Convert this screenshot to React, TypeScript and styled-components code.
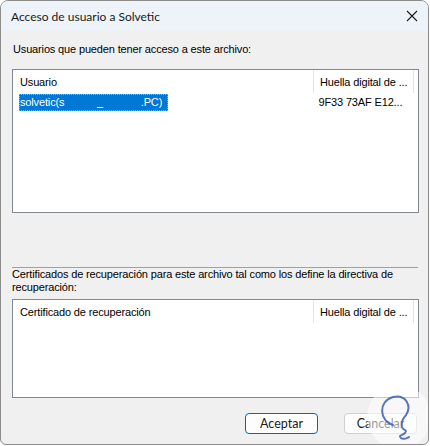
import React from "react";
import styled, { createGlobalStyle } from "styled-components";

const GlobalStyle = createGlobalStyle`
  html, body {
    margin: 0;
    padding: 0;
    background: #ffffff;
  }
  #root {
    width: 430px;
    height: 446px;
  }
`;

interface Column {
  label: string;
  width: number;
}

interface Row {
  cells: string[];
  selected?: boolean;
}

function ListView({
  columns,
  rows,
  height,
}: {
  columns: Column[];
  rows: Row[];
  height: number;
}) {
  return (
    <ListBox $height={height}>
      <HeaderRow>
        {columns.map((c) => (
          <HeaderCell key={c.label} $width={c.width}>
            {c.label}
          </HeaderCell>
        ))}
      </HeaderRow>
      {rows.map((r, i) => (
        <ItemRow key={i}>
          {r.cells.map((cell, j) => (
            <ItemCell key={j} $width={columns[j].width}>
              {j === 0 && r.selected ? <Selected>{cell}</Selected> : cell}
            </ItemCell>
          ))}
        </ItemRow>
      ))}
    </ListBox>
  );
}

function App() {
  return (
    <>
      <GlobalStyle />
      <Window>
        <TitleBar>
          <Title>Acceso de usuario a Solvetic</Title>
          <CloseButton aria-label="Cerrar">
            <svg width="12" height="12" viewBox="0 0 12 12">
              <path
                d="M1 1 L11 11 M11 1 L1 11"
                stroke="#1a1a1a"
                strokeWidth="1.1"
                fill="none"
              />
            </svg>
          </CloseButton>
        </TitleBar>
        <Body>
          <Label>Usuarios que pueden tener acceso a este archivo:</Label>
          <ListView
            height={144}
            columns={[
              { label: "Usuario", width: 295 },
              { label: "Huella digital de ...", width: 100 },
            ]}
            rows={[
              {
                cells: ["solvetic(s\u2003\u2003\u2003_\u2003\u2003\u2003\u2002.PC)", "9F33 73AF E12..."],
                selected: true,
              },
            ]}
          />
          <Spacer />
          <SectionLabel>
            Certificados de recuperación para este archivo tal como los define la
            directiva de recuperación:
          </SectionLabel>
          <ListView
            height={99}
            columns={[
              { label: "Certificado de recuperación", width: 295 },
              { label: "Huella digital de ...", width: 100 },
            ]}
            rows={[]}
          />
          <Footer>
            <Button $primary>Aceptar</Button>
            <Button>Cancelar</Button>
          </Footer>
        </Body>
        <Watermark>
          <svg width="66" height="66" viewBox="0 0 66 66">
            <circle cx="33" cy="33" r="32" fill="rgba(255,255,255,0.55)" />
            <path
              d="M27 41 C13 37 12 17 27 13 C40 10 46 22 40 31 C37 35 35 37 36 43 C37 47 42 45 39 49 C36 52 32 51 35 54 C37 56 42 54 43 53"
              stroke="#3b5fae"
              strokeWidth="2"
              fill="none"
              strokeLinecap="round"
              opacity="0.85"
            />
          </svg>
        </Watermark>
      </Window>
    </>
  );
}

const Window = styled.div`
  position: relative;
  box-sizing: border-box;
  width: 429px;
  height: 445px;
  border: 1px solid #8c8c8c;
  border-radius: 8px 8px 6px 6px;
  background: #f0f0f0;
  overflow: hidden;
  display: flex;
  flex-direction: column;
`;

const TitleBar = styled.div`
  height: 30px;
  flex-shrink: 0;
  background: #eef3f9;
  display: flex;
  align-items: center;
  justify-content: space-between;
  padding: 0 0 0 10px;
`;

const Title = styled.div`
  font-family: "Segoe UI", Lato, sans-serif;
  font-size: 12px;
  color: #1a1a1a;
`;

const CloseButton = styled.div`
  width: 28px;
  height: 30px;
  margin-right: 2px;
  display: flex;
  align-items: center;
  justify-content: center;
`;

const Body = styled.div`
  flex: 1;
  display: flex;
  flex-direction: column;
  padding: 10px 10px 0 11px;
  font-family: "Liberation Sans", Arial, sans-serif;
  font-size: 11px;
  letter-spacing: -0.15px;
  color: #000;
`;

const Label = styled.div`
  line-height: 13px;
  margin: 2px 0 0 1px;
  height: 26px;
`;

const SectionLabel = styled.div`
  line-height: 13px;
  height: 32px;
  box-sizing: border-box;
  border-top: 1px solid #a0a0a0;
  overflow: hidden;
`;

const Spacer = styled.div`
  height: 54px;
`;

const ListBox = styled.div<{ $height: number }>`
  box-sizing: border-box;
  height: ${(p) => p.$height}px;
  width: 407px;
  border: 1px solid #828790;
  background: #ffffff;
  padding: 0 0 0 6px;
`;

const HeaderRow = styled.div`
  display: flex;
  height: 23px;
  align-items: stretch;
`;

const HeaderCell = styled.div<{ $width: number }>`
  width: ${(p) => p.$width}px;
  box-sizing: border-box;
  padding: 6px 0 0 1px;
  border-right: 1px solid #e5e5e5;
  white-space: nowrap;
  overflow: hidden;
  & + & {
    padding-left: 6px;
  }
`;

const ItemRow = styled.div`
  display: flex;
  height: 18px;
  align-items: center;
`;

const ItemCell = styled.div<{ $width: number }>`
  width: ${(p) => p.$width}px;
  white-space: nowrap;
  & + & {
    padding-left: 6px;
  }
`;

const Selected = styled.span`
  display: inline-block;
  width: 148px;
  height: 17px;
  line-height: 17px;
  padding-left: 1px;
  background: #0078d7;
  color: #ffffff;
  outline: 1px dotted #f0a040;
  outline-offset: -1px;
  white-space: pre;
`;

const Footer = styled.div`
  display: flex;
  justify-content: flex-end;
  gap: 26px;
  padding: 15px 1px 0 0;
`;

const Button = styled.div<{ $primary?: boolean }>`
  box-sizing: border-box;
  width: 73px;
  height: 21px;
  border: 1px solid ${(p) => (p.$primary ? "#0067c0" : "#d0d0d0")};
  ${(p) => p.$primary && "box-shadow: inset 0 0 0 1px #ffffff;"}
  border-radius: 4px;
  background: #fdfdfd;
  display: flex;
  align-items: center;
  justify-content: center;
  font-family: "Segoe UI", Lato, sans-serif;
  font-size: 12.5px;
  letter-spacing: 0;
  color: #1a1a1a;
`;

const Watermark = styled.div`
  position: absolute;
  right: -4px;
  bottom: -6px;
  width: 66px;
  height: 66px;
`;

export default App;
